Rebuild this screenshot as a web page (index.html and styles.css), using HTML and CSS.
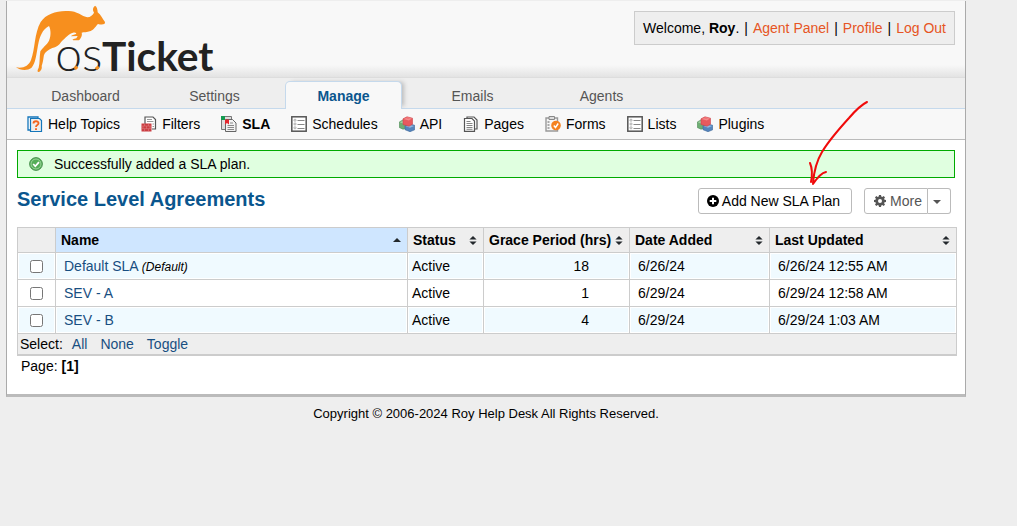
FILE: index.html
```
<!DOCTYPE html>
<html lang="en">
<head>
<meta charset="utf-8">
<title>osTicket :: Service Level Agreements</title>
<link rel="stylesheet" href="styles.css">
</head>
<body>
<svg class="defs" aria-hidden="true">
  <symbol id="i-list" viewBox="0 0 16 16">
    <rect x=".8" y=".8" width="14.4" height="14.4" fill="#fff" stroke="#555" stroke-width="1.5"/>
    <g fill="#eee" stroke="#999" stroke-width=".7"><circle cx="4" cy="4.2" r="1.1"/><circle cx="4" cy="8" r="1.1"/><circle cx="4" cy="11.8" r="1.1"/></g>
    <path d="M6.500 4.500h7M6.500 8.500h7M6.500 12.500h7" stroke="#888"/>
  </symbol>
  <symbol id="i-blocks" viewBox="0 0 16 16">
    <path d="M.3 6 3.500 4.200l4 2v6L4 13.200.3 11.500z" fill="#6fae74" stroke="#4c8a55" stroke-width=".6"/>
    <path d="M.8 6.200 3.500 5l3 1.400L4 7.600z" fill="#a5d3a5"/>
    <path d="M6 9.500l4-1.700 5.700 1.500v4.500L11 15.700l-5-2z" fill="#5585bd" stroke="#3d6899" stroke-width=".6"/>
    <path d="M6.500 10l4.500-1 4.300 1-4.300 1.800z" fill="#92b7df"/>
    <path d="M4 2.800 8 .8l5.500 1.400v6L10 10.200 4 8.500z" fill="#e85a5e" stroke="#cb444b" stroke-width=".6"/>
    <path d="M4.600 3 8.500 1.400 13 2.500 9.800 4.500z" fill="#f48a8a"/>
    <ellipse cx="9" cy="2" rx="1.800" ry="1" fill="#ef7276"/>
  </symbol>
  <symbol id="i-sort" viewBox="0 0 8 10"><path d="M4 0 8 4H0zM0 6h8L4 10z" fill="#23282c"/></symbol>
</svg>

<div class="container">
  <header class="header">
    <a class="logo" href="#" aria-label="osTicket">
      <svg width="210" height="76" viewBox="0 0 630 228">
        <g transform="translate(-21 -3)">
          <path fill="#f78f1e" d="M48 202C70 206 86 198 93 180C106 146 102 102 122 66C140 38 180 29 215 34C238 38 248 50 262 52C272 51 278 45 282 38C277 30 278 22 285 17C291 20 293 29 293 37C304 45 307 57 315 66C316 74 306 75 294 72C287 78 284 88 272 93C260 98 251 96 245 98C248 107 241 118 236 121L220 121C215 118 221 117 229 115L233 108L213 109C215 105 222 105 228 102C231 99 225 96 219 98C207 101 196 114 184 125C177 137 168 141 157 144C145 149 132 158 131 170C129 183 128 190 125 198C127 206 122 214 116 216C111 215 112 211 116 203C120 188 118 172 121 154C126 144 141 134 147 122C153 108 153 90 147 78C127 88 119 110 114 136C109 164 107 190 94 204C82 213 59 211 48 202Z"/>
          <text class="logo-thin" x="166" y="213">os</text>
          <text class="logo-bold" x="306" y="213">Ticket</text>
          <path d="M224 207 232 200M288 207 296 200" stroke="#f78f1e" stroke-width="9"/>
        </g>
      </svg>
    </a>
    <p class="user"><span>Welcome, <strong>Roy</strong>.</span> <span>|</span> <a href="#">Agent Panel</a> <span>|</span> <a href="#">Profile</a> <span>|</span> <a href="#">Log Out</a></p>
  </header>

  <nav class="tabs">
    <a href="#">Dashboard</a><a href="#">Settings</a><a class="active" href="#">Manage</a><a href="#">Emails</a><a href="#">Agents</a>
  </nav>

  <nav class="subnav">
    <a href="#"><svg viewBox="0 0 16 16"><path d="M1 1h10v13H1z" fill="#fff" stroke="#1476ba" stroke-width="1.300"/><path d="M3.500 2.500h9l2 2v11h-11z" fill="#eee" stroke="#1476ba" stroke-width="1.200"/><path d="M6.500 7.500c0-3 5-3 5-.3 0 2-2.500 1.500-2.500 3.800M9 12.300v1.700" fill="none" stroke="#f4641f" stroke-width="1.900"/></svg>Help Topics</a>
    <a href="#"><svg viewBox="0 0 16 16"><path d="M4 8V1h8l2.500 2.500V13H11" fill="#fff" stroke="#555" stroke-width="1.200"/><path d="M6 3.500h5M6 5.500h6.500M11.500 8h1.500M11.500 10.500h1.500" stroke="#999"/><path d="M.5 7.500h10v8H.5z" fill="#cb3d42"/><path d="M.5 10h10M.5 12.700h10M3.500 7.500V10M7.500 7.500V10M2 10v2.700M5.500 10v2.700M9 10v2.700M3.500 12.700v2.800M7.500 12.700v2.800" stroke="#e08a8a" stroke-width=".5"/></svg>Filters</a>
    <a class="current" href="#"><svg viewBox="0 0 16 16"><path d="M.5.500h10v13H.5z" fill="#ddd" stroke="#777"/><path d="M0 0h4v4H0z" fill="#169a50"/><path d="M4.500 3.500h7l3.500 3.500v8.500H4.500z" fill="#f1f1f1" stroke="#666"/><path d="M4 3.500h4v5L6 7 4 8.500z" fill="#e3262e"/><path d="M9 7h3M6.500 9.500h6.500M6.500 11.500h6.500M6.500 13.500h6.500" stroke="#888"/></svg>SLA</a>
    <a href="#"><svg><use href="#i-list"/></svg>Schedules</a>
    <a href="#"><svg><use href="#i-blocks"/></svg>API</a>
    <a href="#"><svg viewBox="0 0 16 16"><path d="M4 2.500V1h7l3 3v9h-2" fill="#fff" stroke="#555" stroke-width="1.200"/><path d="M1.500 2.500h7.500l2.500 2.500v10.400h-10z" fill="#fff" stroke="#555" stroke-width="1.200"/><path d="M3.500 5.500h4M3.500 7.500h6M3.500 9.500h6M3.500 11.500h6M3.500 13.300h6" stroke="#777" stroke-width=".9"/></svg>Pages</a>
    <a href="#"><svg viewBox="0 0 16 16"><path d="M1 2h11.500v13H1z" fill="#f7f7f7" stroke="#999" stroke-width="1.400"/><path d="M4 .5h5.500v3H4z" fill="#ddd" stroke="#888"/><path d="M3.500 5v9" stroke="#aaa" stroke-width="2" stroke-dasharray="2 1"/><circle cx="11" cy="9.500" r="4.800" fill="#f58220"/><path d="m8.800 9.500 1.700 2 2.700-4" fill="none" stroke="#fff" stroke-width="1.400"/></svg>Forms</a>
    <a href="#"><svg><use href="#i-list"/></svg>Lists</a>
    <a href="#"><svg><use href="#i-blocks"/></svg>Plugins</a>
  </nav>

  <main class="content">
    <div class="notice" role="status">
      <svg viewBox="0 0 16 16"><circle cx="8" cy="8" r="7.300" fill="#55ad58" stroke="#3f8745"/><circle cx="8" cy="8" r="5.700" fill="none" stroke="#a4dba2"/><path d="m4.800 8 2.400 2.600 4.200-4.800" fill="none" stroke="#fff" stroke-width="2"/></svg>
      Successfully added a SLA plan.
    </div>

    <div class="title-row">
      <h1>Service Level Agreements</h1>
      <div class="actions">
        <button class="btn" type="button"><svg viewBox="0 0 12 12"><circle cx="6" cy="6" r="6"/><path d="M6 2.700v6.600M2.700 6h6.600" stroke="#fff" stroke-width="2"/></svg>Add New SLA Plan</button>
        <div class="split">
          <button class="btn more" type="button"><svg viewBox="0 0 12 12"><path fill-rule="evenodd" d="M5 0h2l.3 1.600 1 .4 1.400-.9L11 2.400l-.9 1.400.4 1L12 5v2l-1.500.3-.4 1 .9 1.300L9.700 11l-1.400-.9-1 .4L7 12H5l-.3-1.500-1-.4-1.400.9L1 9.600l.9-1.300-.4-1L0 7V5l1.500-.3.4-1L1 2.400 2.300 1.100l1.400.9 1-.4zM6 4a2 2 0 1 0 0 4 2 2 0 0 0 0-4z"/></svg>More</button>
          <button class="btn caret" type="button" aria-label="More actions"><svg viewBox="0 0 8 4"><path d="M0 0h8L4 4z"/></svg></button>
        </div>
      </div>
    </div>

    <table class="list">
      <colgroup><col class="c-check"><col><col class="c-status"><col class="c-grace"><col class="c-added"><col class="c-updated"></colgroup>
      <thead>
        <tr>
          <th></th>
          <th class="sorted"><a href="#">Name<svg viewBox="0 0 8 4"><path d="M4 0 8 4H0z" fill="#23282c"/></svg></a></th>
          <th><a href="#">Status<svg><use href="#i-sort"/></svg></a></th>
          <th><a href="#">Grace Period (hrs)<svg><use href="#i-sort"/></svg></a></th>
          <th><a href="#">Date Added<svg><use href="#i-sort"/></svg></a></th>
          <th><a href="#">Last Updated<svg><use href="#i-sort"/></svg></a></th>
        </tr>
      </thead>
      <tbody>
        <tr><td class="check"><input type="checkbox" aria-label="Default SLA"></td><td class="wide"><a href="#">Default SLA</a> <em>(Default)</em></td><td>Active</td><td class="num">18</td><td class="wide">6/26/24</td><td class="wide">6/26/24 12:55 AM</td></tr>
        <tr><td class="check"><input type="checkbox" aria-label="SEV - A"></td><td class="wide"><a href="#">SEV - A</a></td><td>Active</td><td class="num">1</td><td class="wide">6/29/24</td><td class="wide">6/29/24 12:58 AM</td></tr>
        <tr><td class="check"><input type="checkbox" aria-label="SEV - B"></td><td class="wide"><a href="#">SEV - B</a></td><td>Active</td><td class="num">4</td><td class="wide">6/29/24</td><td class="wide">6/29/24 1:03 AM</td></tr>
      </tbody>
      <tfoot>
        <tr><td colspan="6"><div class="select"><span>Select:</span><a href="#">All</a><a href="#">None</a><a href="#">Toggle</a></div></td></tr>
      </tfoot>
    </table>
    <p class="pager">Page: <strong>[1]</strong></p>
  </main>

  <svg class="arrow" viewBox="0 0 64 88" aria-hidden="true"><path d="M61 3C57 5 49 12 43 19C33 30 22 43 16 53C10 63 8 72 7 84M4 64C7 71 6 78 5 83M7 85C11 79 15 74 20 73"/></svg>
</div>
<footer class="footer">Copyright © 2006-2024 Roy Help Desk All Rights Reserved.</footer>
</body>
</html>
```
FILE: styles.css
```
* { box-sizing: border-box; }
body {
  margin: 0;
  padding: 1px 51px 0 6px;
  background: #eee;
  color: #000;
  font: 14px/20px "Liberation Sans", Arial, sans-serif;
}
a { color: #184e81; text-decoration: none; }
p, h1 { margin: 0; }
.defs { display: none; }

.container {
  position: relative;
  background: #fff;
  border: 1px solid #aaa;
  border-top: 0;
  border-bottom: 3px solid #bbb;
}

.header {
  display: flex;
  justify-content: space-between;
  align-items: flex-start;
  height: 77px;
  padding-right: 10px;
  background: linear-gradient(#f8f8f8 0 64px, #e3e3e3 76px);
  border-bottom: 1px solid #ddd;
}
.logo svg { display: block; overflow: visible; }
.logo-thin { font: 300 144px Lato, sans-serif; fill: #222; }
.logo-bold { font: bold 122px Lato, sans-serif; fill: #222; }
.user {
  display: flex;
  gap: 5px;
  margin-top: 10px;
  padding: 6px 8px;
  background: #eee;
  border: 1px solid #ccc;
}
.user a { color: #e65524; }

.tabs {
  display: flex;
  align-items: flex-end;
  gap: 12px;
  height: 31px;
  padding-left: 20px;
  background: #eee;
  border-bottom: 1px solid #c5d9ec;
}
.tabs a {
  width: 117px;
  height: 26px;
  padding-top: 4px;
  color: #555;
  text-align: center;
}
.tabs .active {
  height: 28px;
  margin-bottom: -1px;
  background: #f8f8f8;
  border: 1px solid #c5d9ec;
  border-bottom: 0;
  border-radius: 5px 5px 0 0;
  box-shadow: 4px -1px 4px -2px #bbb;
  color: #0a568e;
  font-weight: bold;
}

.subnav {
  position: relative;
  display: flex;
  gap: 21px;
  padding: 5px 20px;
  background: #f8f8f8;
  border-bottom: 1px solid #bbb;
}
.subnav a { display: flex; align-items: center; gap: 5px; color: #000; white-space: nowrap; }
.subnav svg { width: 16px; height: 16px; }
.subnav .current { font-weight: bold; }

.content { padding: 10px 8px 18px 10px; }
.notice {
  display: flex;
  align-items: center;
  gap: 11px;
  margin-right: 2px;
  padding: 3px 11px;
  background: #e0ffe0;
  border: 1px solid #00aa00;
}
.notice svg { width: 14px; height: 14px; }

.title-row {
  display: flex;
  justify-content: space-between;
  align-items: flex-start;
  padding: 10px 6px 13px 0;
}
h1 { color: #0a568e; font-size: 20px; line-height: 22px; }
.actions, .split { display: flex; }
.actions { gap: 12px; }
.btn {
  display: flex;
  align-items: center;
  gap: 3px;
  height: 26px;
  padding: 0 11px 0 8px;
  background: #fff;
  border: 1px solid #bbb;
  border-radius: 3px;
  color: #000;
  font: inherit;
}
.btn svg { width: 12px; height: 12px; fill: currentColor; }
.more { gap: 4px; padding: 0 5px 0 9px; border-radius: 3px 0 0 3px; color: #555; }
.caret { padding: 2px 9px 0 5px; border-left: 0; border-radius: 0 3px 3px 0; color: #555; }
.caret svg { width: 8px; height: 4px; }

.list { width: 100%; table-layout: fixed; border-collapse: collapse; }
.c-check { width: 38px; }
.c-status { width: 76px; }
.c-grace { width: 146px; }
.c-added { width: 140px; }
.c-updated { width: 187px; }
.list th, .list td { height: 27px; padding: 0 4px; border: 1px solid #ccc; text-align: left; }
.list th { height: 25px; padding: 0 6px 0 5px; background: #eee; white-space: nowrap; }
.list th.sorted { background: #cfe6ff; }
.list th a { display: flex; justify-content: space-between; align-items: center; color: #000; }
.list th svg { flex: none; width: 8px; height: 9px; }
.list th.sorted svg { height: 4px; }
.list tbody td { box-shadow: inset 0 0 0 1px #fff; }
.list tbody tr:nth-child(odd) td { background: #f0faff; }
.list .wide { padding-left: 8px; }
.list .num { padding-right: 40px; text-align: right; }
.list .check { padding: 0; text-align: center; }
.check input { display: block; width: 13px; height: 13px; margin: 1px auto 0; }
.list em { font-size: 12px; }
.list tfoot td { height: 21px; padding: 0 2px; background: #eee; border-bottom: 2px solid #ccc; }
.select { display: flex; gap: 13px; }
.select span { margin-right: -4px; }
.pager { padding-left: 4px; }

.arrow {
  position: absolute;
  top: 98px;
  right: 95px;
  width: 64px;
  height: 88px;
  fill: none;
  stroke: #f00a0a;
  stroke-width: 2;
  stroke-linecap: round;
  pointer-events: none;
}
.footer { padding-top: 7px; font-size: 13px; text-align: center; }
```
